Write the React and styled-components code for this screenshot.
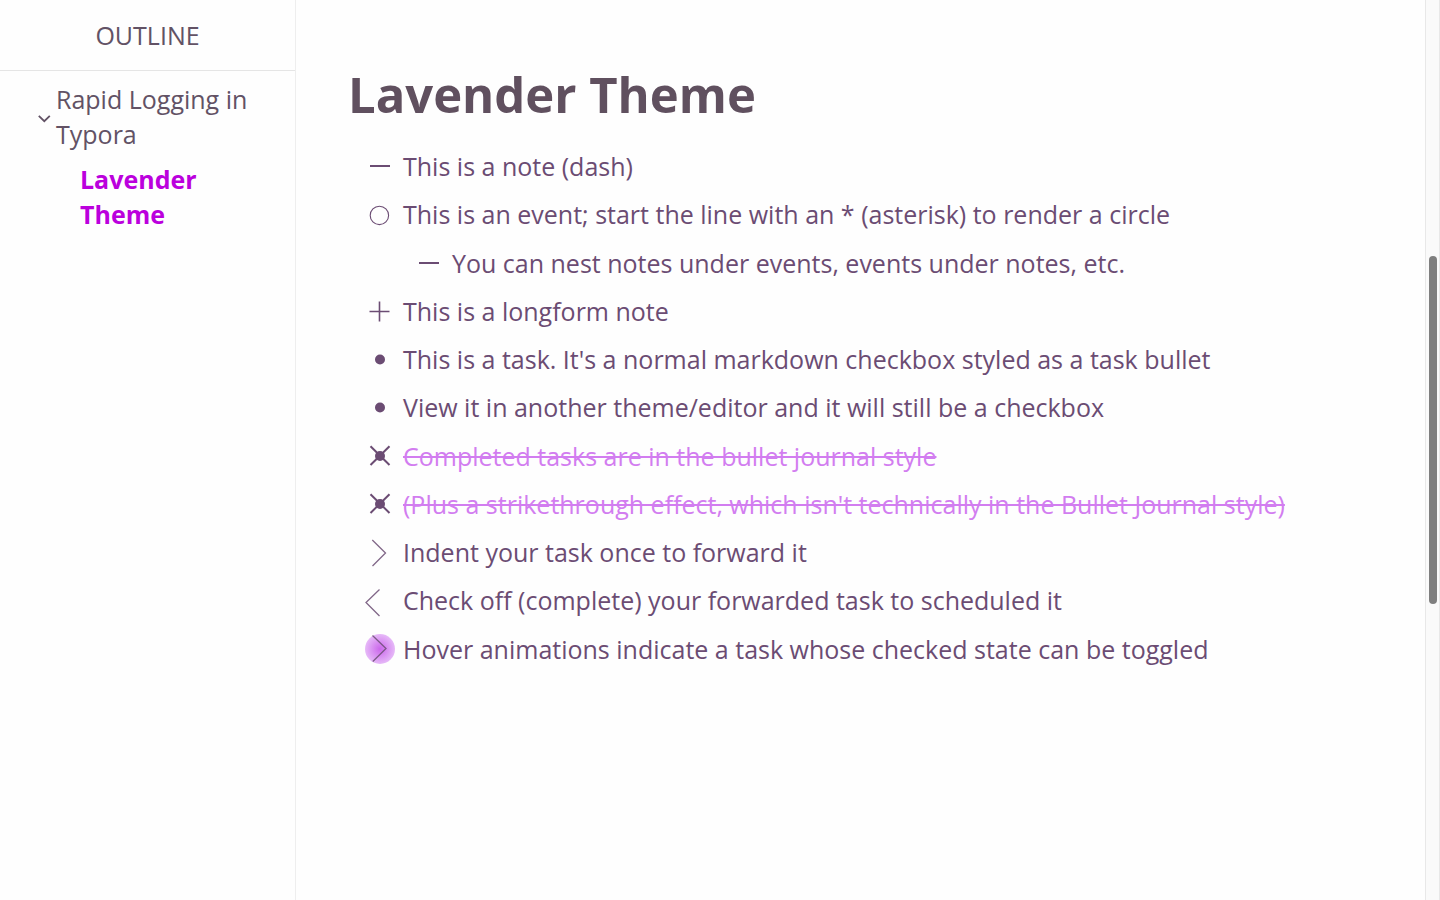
import React from "react";
import styled, { createGlobalStyle } from "styled-components";

const GlobalStyle = createGlobalStyle`
  *, *::before, *::after { box-sizing: border-box; }
  body {
    margin: 0;
    background: #fefefe;
    color: #6b4c73;
    font-family: "Open Sans", "Noto Sans", sans-serif;
    font-size: 25px;
  }
`;

const Page = styled.div`
  display: flex;
  min-height: 100vh;
`;

const Sidebar = styled.nav`
  flex: 0 0 296px;
  border-right: 1px solid #eeeeee;
  color: #625265;
  line-height: 35px;
`;

const SidebarTitle = styled.h2`
  margin: 0;
  height: 71px;
  padding-top: 18px;
  border-bottom: 1px solid #e5e5e5;
  font-size: 25px;
  font-weight: 400;
  text-align: center;
  text-transform: uppercase;
`;

const Outline = styled.ul`
  list-style: none;
  margin: 0;
  padding: 11px 24px 0 36px;
`;

const OutlineItem = styled.div`
  display: flex;
  align-items: center;
  gap: 4px;
`;

const Toggle = styled.button`
  display: grid;
  place-items: center;
  flex: none;
  width: 16px;
  height: 16px;
  padding: 0;
  border: 0;
  background: none;
  color: inherit;
`;

const OutlineLink = styled.a`
  color: ${(p) => (p.$active ? "#bb00dd" : "inherit")};
  font-weight: ${(p) => (p.$active ? 700 : 400)};
  text-decoration: none;
`;

const SubOutline = styled.ul`
  list-style: none;
  margin: 0;
  padding: 10px 48px 0 44px;
`;

const Document = styled.main`
  flex: 1;
  min-width: 0;
  padding: 59px 52px 48px;
`;

const Heading = styled.h1`
  margin: 0;
  color: #60505f;
  font-size: 49px;
  font-weight: 700;
  line-height: 70px;
`;

const Lists = styled.div`
  padding: 13px 0 0 17px;
`;

const List = styled.ul`
  list-style: none;
  margin: 0;
  padding: ${(p) => (p.$spaced ? "1px" : "0")} 0 0 ${(p) => (p.$nested ? "49px" : "0")};
`;

const Row = styled.div`
  display: flex;
  align-items: center;
  gap: 8px;
  min-height: 48px;
  line-height: 34px;
`;

const Marker = styled.span`
  display: grid;
  flex: none;
  width: 30px;
  height: 30px;

  > * { grid-area: 1 / 1; }
`;

const Checkbox = styled.input`
  appearance: none;
  width: 30px;
  height: 30px;
  margin: 0;
`;

const Glyph = styled.svg`
  overflow: visible;
  pointer-events: none;
`;

const TaskLabel = styled.label`
  color: ${(p) => (p.$done ? "#d27df0" : "inherit")};
  text-decoration: ${(p) => (p.$done ? "line-through" : "none")};
`;

const ScrollTrack = styled.div`
  position: sticky;
  top: 0;
  display: flex;
  flex: 0 0 15px;
  flex-direction: column;
  align-items: center;
  height: 100vh;
  border: solid #e8e8e8;
  border-width: 0 1px;
  background: #fafafa;

  &::before { content: ""; flex: 256; }
  &::after { content: ""; flex: 296; }
`;

const ScrollThumb = styled.div`
  flex: 348;
  width: 8px;
  border-radius: 4px;
  background: #7f7f7f;
`;

const glyphs = {
  dash: <path d="M5 15H25" strokeWidth="2" />,
  circle: <circle cx="14.4" cy="16.4" r="9.2" strokeWidth="1.1" />,
  plus: <path d="M4.5 15.5H24.5M14.5 5.5V25.5" strokeWidth="1.6" />,
  dot: <circle cx="15" cy="15.5" r="5" fill="currentColor" stroke="none" />,
  cross: (
    <>
      <path d="M5.5 5.2L24.5 24M24.5 5.2L5.5 24" strokeWidth="2" />
      <circle cx="15" cy="15" r="5" fill="currentColor" stroke="none" />
    </>
  ),
  forward: <path d="M7.3 3L20.5 16L7.5 29" strokeWidth="1.3" strokeOpacity="0.85" />,
  scheduled: <path d="M14.5 4.5L1 17.5L14.5 31" strokeWidth="1.3" strokeOpacity="0.85" />,
  hover: (
    <>
      <defs>
        <radialGradient id="halo">
          <stop offset="0" stopColor="#cb66eb" />
          <stop offset="1" stopColor="#e6b9f8" />
        </radialGradient>
      </defs>
      <circle cx="15" cy="15" r="15" fill="url(#halo)" stroke="none" />
      <path d="M7.5 1.5L21 14.5L7.8 27.5" strokeWidth="1.3" strokeOpacity="0.85" />
    </>
  ),
};

function Bullet({ kind }) {
  return (
    <Glyph viewBox="0 0 30 30" width="30" height="30" fill="none" stroke="currentColor" aria-hidden="true">
      {glyphs[kind]}
    </Glyph>
  );
}

function Note({ kind, children, nested }) {
  return (
    <li>
      <Row>
        <Marker><Bullet kind={kind} /></Marker>
        <span>{children}</span>
      </Row>
      {nested}
    </li>
  );
}

function Task({ id, kind, done, checked, children }) {
  return (
    <li>
      <Row>
        <Marker>
          <Checkbox type="checkbox" id={id} defaultChecked={done || checked} />
          <Bullet kind={kind} />
        </Marker>
        <TaskLabel htmlFor={id} $done={done}>{children}</TaskLabel>
      </Row>
    </li>
  );
}

export default function App() {
  return (
    <Page>
      <GlobalStyle />
      <Sidebar aria-label="Outline">
        <SidebarTitle>Outline</SidebarTitle>
        <Outline>
          <li>
            <OutlineItem>
              <Toggle type="button" aria-label="Collapse section" aria-expanded="true">
                <svg width="16" height="16" viewBox="0 0 16 16" fill="none" stroke="currentColor" strokeWidth="1.8" aria-hidden="true">
                  <path d="M2.8 6.8L8.3 12.2L13.8 6.8" />
                </svg>
              </Toggle>
              <OutlineLink href="#rapid-logging">Rapid Logging in Typora</OutlineLink>
            </OutlineItem>
            <SubOutline>
              <li>
                <OutlineLink href="#lavender-theme" $active>Lavender Theme</OutlineLink>
              </li>
            </SubOutline>
          </li>
        </Outline>
      </Sidebar>
      <Document>
        <Heading id="lavender-theme">Lavender Theme</Heading>
        <Lists>
          <List>
            <Note kind="dash">This is a note (dash)</Note>
            <Note
              kind="circle"
              nested={
                <List $nested $spaced>
                  <Note kind="dash">You can nest notes under events, events under notes, etc.</Note>
                </List>
              }
            >
              This is an event; start the line with an * (asterisk) to render a circle
            </Note>
            <Note kind="plus">This is a longform note</Note>
          </List>
          <List>
            <Task id="task" kind="dot">This is a task. It's a normal markdown checkbox styled as a task bullet</Task>
            <Task id="editor" kind="dot">View it in another theme/editor and it will still be a checkbox</Task>
          </List>
          <List $spaced>
            <Task id="completed" kind="cross" done>Completed tasks are in the bullet journal style</Task>
            <Task id="strike" kind="cross" done>(Plus a strikethrough effect, which isn't technically in the Bullet Journal style)</Task>
          </List>
          <List>
            <Task id="forward" kind="forward">Indent your task once to forward it</Task>
            <Task id="scheduled" kind="scheduled" checked>Check off (complete) your forwarded task to scheduled it</Task>
          </List>
          <List $spaced>
            <Task id="hover" kind="hover">Hover animations indicate a task whose checked state can be toggled</Task>
          </List>
        </Lists>
      </Document>
      <ScrollTrack aria-hidden="true">
        <ScrollThumb />
      </ScrollTrack>
    </Page>
  );
}
